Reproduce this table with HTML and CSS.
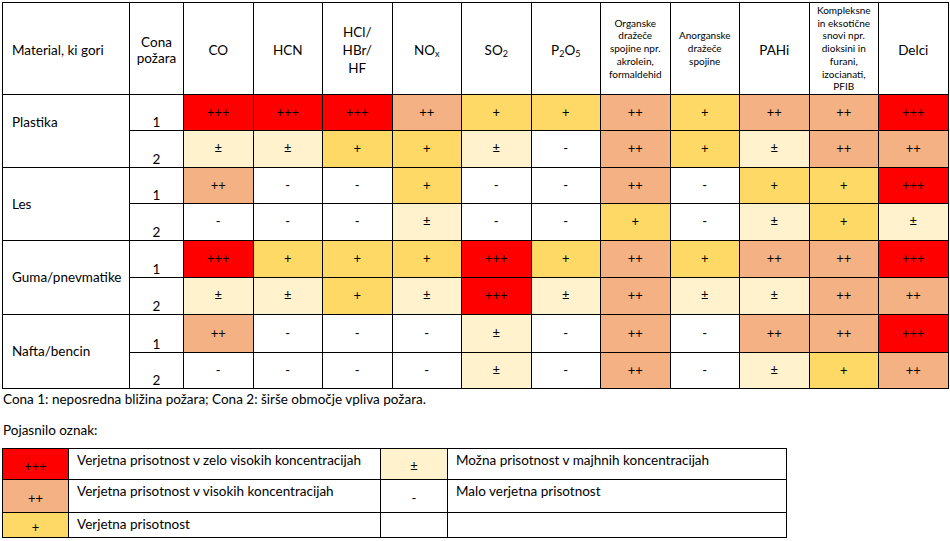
FILE: index.html
```html
<!DOCTYPE html>
<html lang="sl">
<head>
<meta charset="utf-8">
<title>Produkti gorenja</title>
<link rel="stylesheet" href="styles.css">
</head>
<body>
<table class="main">
  <colgroup>
    <col class="c-mat"><col class="c-zone">
    <col class="c-v"><col class="c-v"><col class="c-v"><col class="c-v"><col class="c-v"><col class="c-v">
    <col class="c-v"><col class="c-v"><col class="c-v"><col class="c-v"><col class="c-v">
  </colgroup>
  <thead>
    <tr class="h-head">
      <th class="mat">Material, ki gori</th>
      <th class="zone-h">Cona<br>požara</th>
      <th>CO</th>
      <th>HCN</th>
      <th class="tall">HCl/<br>HBr/<br>HF</th>
      <th>NO<sub>x</sub></th>
      <th>SO<sub>2</sub></th>
      <th>P<sub>2</sub>O<sub>5</sub></th>
      <th class="small">Organske<br>dražeče<br>spojine npr.<br>akrolein,<br>formaldehid</th>
      <th class="small">Anorganske<br>dražeče<br>spojine</th>
      <th>PAHi</th>
      <th class="small">Kompleksne<br>in eksotične<br>snovi npr.<br>dioksini in<br>furani,<br>izocianati,<br>PFIB</th>
      <th>Delci</th>
    </tr>
  </thead>
  <tbody>
    <tr class="h36">
      <td class="mat mat-up" rowspan="2">Plastika</td>
      <td class="zone">1</td>
      <td class="r">+++</td><td class="r">+++</td><td class="r">+++</td><td class="s">++</td><td class="y">+</td><td class="y">+</td><td class="s">++</td><td class="y">+</td><td class="s">++</td><td class="s">++</td><td class="r">+++</td>
    </tr>
    <tr class="h37">
      <td class="zone">2</td>
      <td class="c">±</td><td class="c">±</td><td class="y">+</td><td class="y">+</td><td class="c">±</td><td>-</td><td class="s">++</td><td class="y">+</td><td class="c">±</td><td class="s">++</td><td class="s">++</td>
    </tr>
    <tr class="h36">
      <td class="mat" rowspan="2">Les</td>
      <td class="zone">1</td>
      <td class="s">++</td><td>-</td><td>-</td><td class="y">+</td><td>-</td><td>-</td><td class="s">++</td><td>-</td><td class="y">+</td><td class="y">+</td><td class="r">+++</td>
    </tr>
    <tr class="h37">
      <td class="zone">2</td>
      <td>-</td><td>-</td><td>-</td><td class="c">±</td><td>-</td><td>-</td><td class="y">+</td><td>-</td><td class="c">±</td><td class="y">+</td><td class="c">±</td>
    </tr>
    <tr class="h37">
      <td class="mat" rowspan="2">Guma/pnevmatike</td>
      <td class="zone">1</td>
      <td class="r">+++</td><td class="y">+</td><td class="y">+</td><td class="y">+</td><td class="r">+++</td><td class="y">+</td><td class="s">++</td><td class="y">+</td><td class="s">++</td><td class="s">++</td><td class="r">+++</td>
    </tr>
    <tr class="h37">
      <td class="zone">2</td>
      <td class="c">±</td><td class="c">±</td><td class="y">+</td><td class="c">±</td><td class="r">+++</td><td class="c">±</td><td class="s">++</td><td class="c">±</td><td class="c">±</td><td class="s">++</td><td class="s">++</td>
    </tr>
    <tr class="h38">
      <td class="mat" rowspan="2">Nafta/bencin</td>
      <td class="zone">1</td>
      <td class="s">++</td><td>-</td><td>-</td><td>-</td><td class="c">±</td><td>-</td><td class="s">++</td><td>-</td><td class="s">++</td><td class="s">++</td><td class="r">+++</td>
    </tr>
    <tr class="h36">
      <td class="zone">2</td>
      <td>-</td><td>-</td><td>-</td><td>-</td><td class="c">±</td><td>-</td><td class="s">++</td><td>-</td><td class="c">±</td><td class="y">+</td><td class="s">++</td>
    </tr>
  </tbody>
</table>

<p class="note">Cona 1: neposredna bližina požara; Cona 2: širše območje vpliva požara.</p>
<p class="legend-title">Pojasnilo oznak:</p>

<table class="legend">
  <colgroup>
    <col class="l-sym"><col class="l-txt"><col class="l-sym2"><col class="l-txt2">
  </colgroup>
  <tr class="l1">
    <td class="sym r">+++</td>
    <td class="txt">Verjetna prisotnost v zelo visokih koncentracijah</td>
    <td class="sym c">±</td>
    <td class="txt">Možna prisotnost v majhnih koncentracijah</td>
  </tr>
  <tr class="l2">
    <td class="sym s">++</td>
    <td class="txt">Verjetna prisotnost v visokih koncentracijah</td>
    <td class="sym">-</td>
    <td class="txt">Malo verjetna prisotnost</td>
  </tr>
  <tr class="l3">
    <td class="sym y">+</td>
    <td class="txt">Verjetna prisotnost</td>
    <td class="sym"></td>
    <td class="txt"></td>
  </tr>
</table>
</body>
</html>
```

FILE: styles.css
```css
html, body {
  background: #ffffff;
}

body {
  margin: 0;
  padding: 2px 0 0 2px;
  font-family: Lato, "Noto Sans", sans-serif;
  font-size: 13.5px;
  color: #000000;
}

/* main table */
.main {
  border-collapse: collapse;
  table-layout: fixed;
  width: 946px;
}

.c-mat { width: 127px; }
.c-zone { width: 54px; }
.c-v { width: 69.5px; }

.main th,
.main td {
  border: 1px solid #000000;
  padding: 0;
  text-align: center;
  vertical-align: middle;
  font-weight: normal;
  line-height: 1.2;
}

.main th {
  font-size: 13.5px;
  padding-top: 3px;
}

.h-head { height: 92px; }
.h36 { height: 36px; }
.h37 { height: 37px; }
.h38 { height: 38px; }

.main .mat {
  text-align: left;
  padding-left: 9px;
  font-size: 13.5px;
}

.main .mat-up {
  padding-bottom: 18px;
}

.main .tall {
  line-height: 18px;
}

.main .small {
  font-size: 10px;
  line-height: 12.8px;
  padding-top: 0;
}

.main sub {
  font-size: 9px;
  vertical-align: -2px;
  line-height: 0;
}

.main td {
  font-size: 13px;
}

.main .zone {
  vertical-align: bottom;
  font-size: 13.5px;
  padding-bottom: 0;
  line-height: 16px;
}

/* fills */
.r { background: #ff0000; }
.s { background: #f4b183; }
.y { background: #ffd966; }
.c { background: #fff2cc; }

/* text under table */
.note {
  margin: 1px 0 0 1px;
  line-height: 18px;
}

.legend-title {
  margin: 13px 0 0 1px;
  line-height: 18px;
}

/* legend */
.legend {
  margin-top: 9px;
  border-collapse: collapse;
  table-layout: fixed;
  width: 785px;
}

.l-sym { width: 66px; }
.l-txt { width: 312px; }
.l-sym2 { width: 67px; }
.l-txt2 { width: 339px; }

.legend td {
  border: 1px solid #000000;
  padding: 0;
  line-height: 18px;
}

.legend .sym {
  text-align: center;
  vertical-align: middle;
  font-size: 13px;
  padding-top: 3px;
}

.legend .txt {
  vertical-align: top;
  padding: 2px 0 0 8px;
}

.l1 { height: 31px; }
.l2 { height: 33px; }
.l3 { height: 25px; }
```
